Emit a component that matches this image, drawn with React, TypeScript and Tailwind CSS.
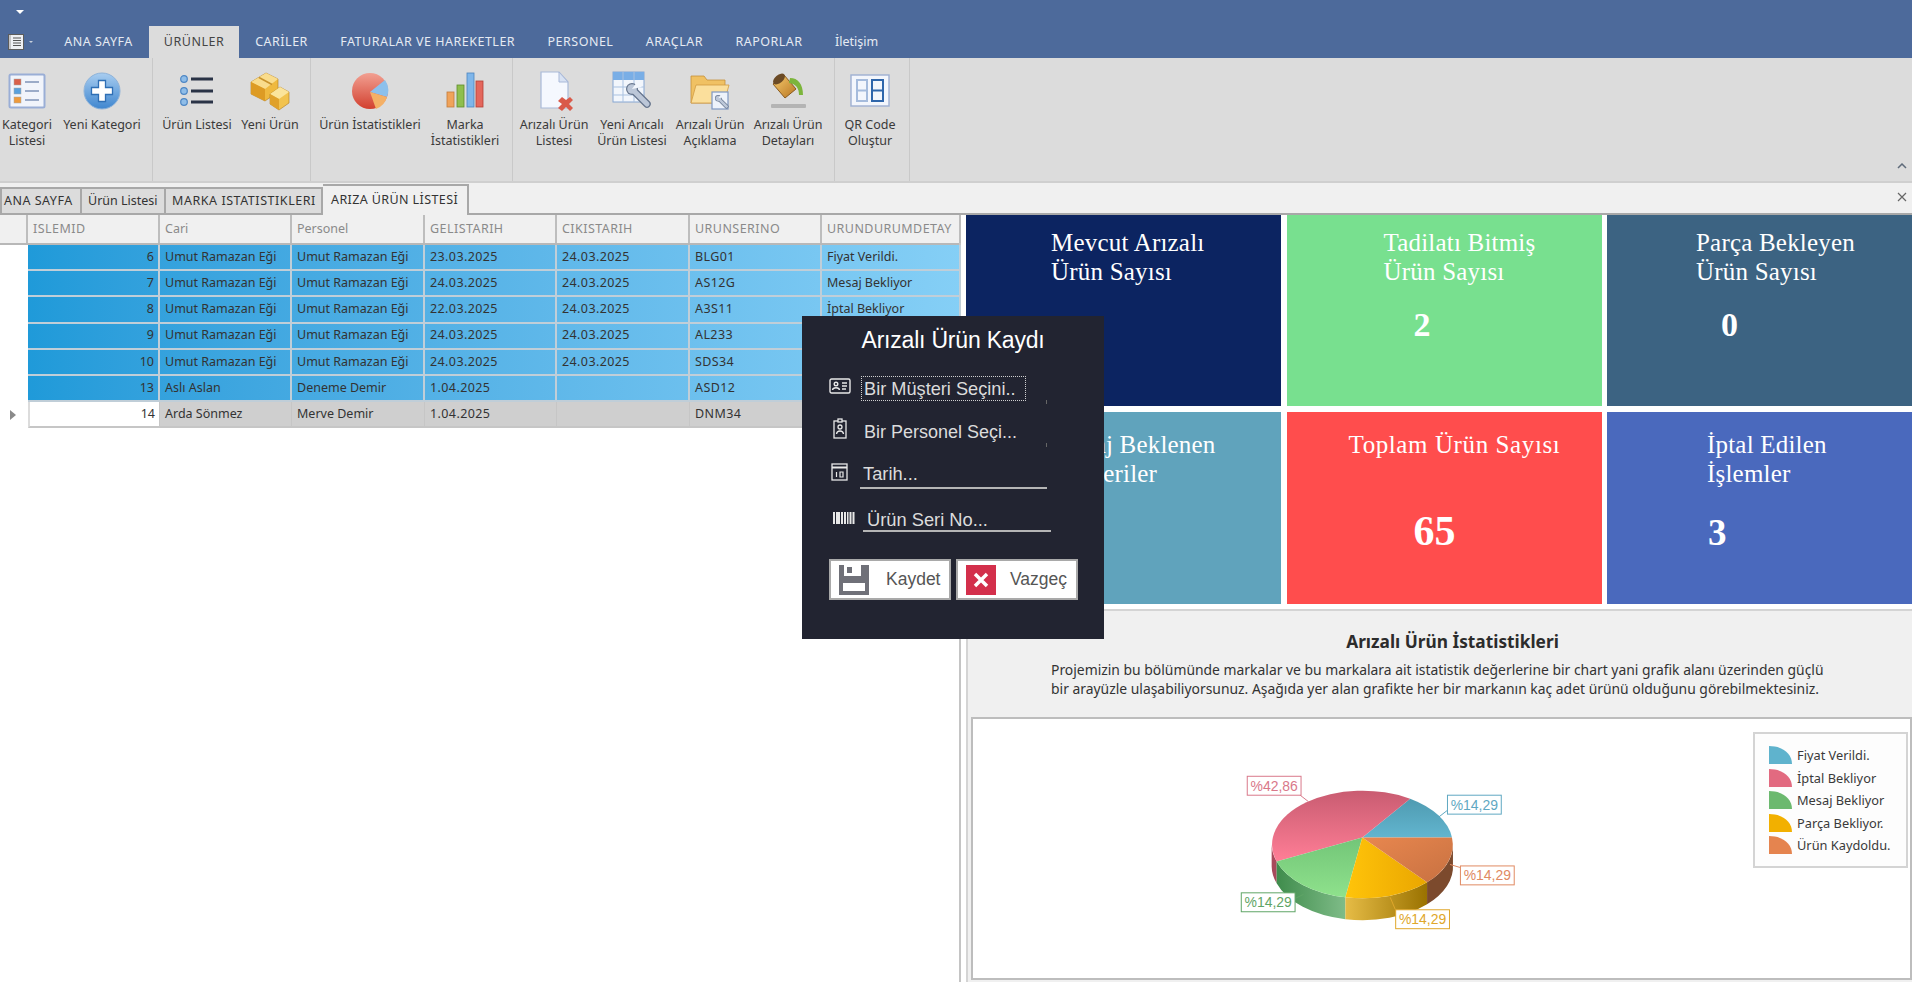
import type { ReactNode } from "react";

const uiFont = "font-['Noto_Sans','Liberation_Sans',sans-serif]";
const tileFont = "font-['Liberation_Serif',serif]";

const KategoriIcon = () => (
  <svg viewBox="0 0 40 40" className="h-10 w-10">
    <rect x="2.500" y="3.500" width="35" height="33" rx="1.500" fill="#f1f4fb" stroke="#9aaed6" strokeWidth="2" />
    <rect x="7" y="8" width="7" height="6" fill="#d9604a" stroke="#a8a8a8" strokeWidth=".5" />
    <rect x="7" y="17" width="7" height="6" fill="#5aa0dc" stroke="#a8a8a8" strokeWidth=".5" />
    <rect x="7" y="26" width="7" height="6" fill="#ee9a3c" stroke="#a8a8a8" strokeWidth=".5" />
    <path d="M18 11h14M18 20h14M18 29h14" stroke="#7f93b8" strokeWidth="1.400" />
  </svg>
);

const PlusIcon = () => (
  <svg viewBox="0 0 40 40" className="h-10 w-10">
    <defs>
      <linearGradient id="plusFill" x1="0" y1="0" x2="0" y2="1">
        <stop offset="0" stopColor="#a8cdf0" />
        <stop offset="1" stopColor="#3f86cf" />
      </linearGradient>
    </defs>
    <circle cx="20" cy="20" r="18" fill="url(#plusFill)" stroke="#8fb3d9" strokeWidth="1" />
    <path d="M16.500 9.500h7v7h7v7h-7v7h-7v-7h-7v-7h7z" fill="#fff" stroke="#2f6fb5" strokeWidth="1.300" />
  </svg>
);

const ListIcon = () => (
  <svg viewBox="0 0 40 40" className="h-10 w-10">
    {[8, 20, 31].map((y) => (
      <g key={y}>
        <circle cx="7" cy={y} r="3.300" fill="#8fbde8" stroke="#4d86c4" strokeWidth="1.200" />
        <rect x="14" y={y - 1.5} width="22" height="3" fill="#2a3346" />
      </g>
    ))}
  </svg>
);

const BoxesIcon = () => (
  <svg viewBox="0 0 40 40" className="h-10 w-10">
    <path d="M1 11l15-9 12 6v13l-13 9L1 23z" fill="#efb93f" stroke="#b07c20" strokeWidth=".6" />
    <path d="M1 11l14 7 13-10-12-6z" fill="#f9dc8c" />
    <path d="M15 18v12L1 23V11z" fill="#dd9b24" />
    <path d="M9 6.500l13 7" stroke="#c8922c" strokeWidth="1.500" />
    <path d="M20 23l10-7 9 5v11l-10 7-9-6z" fill="#f2c34f" stroke="#b07c20" strokeWidth=".6" />
    <path d="M20 23l9 5 10-7-9-5z" fill="#fbe49b" />
    <path d="M29 28v11l-9-6V23z" fill="#e0a12a" />
  </svg>
);

const PieIcon = () => (
  <svg viewBox="0 0 40 40" className="h-10 w-10">
    <defs>
      <linearGradient id="pieRed" x1="0" y1="0" x2="0" y2="1">
        <stop offset="0" stopColor="#f2a092" />
        <stop offset="1" stopColor="#d2402f" />
      </linearGradient>
    </defs>
    <circle cx="20" cy="20" r="18" fill="url(#pieRed)" />
    <path d="M20 21L35 9a18 18 0 0 1 2 17z" fill="#8cc0ec" />
    <path d="M20 21l17 5a18 18 0 0 1-11 12z" fill="#f4b066" />
  </svg>
);

const BarsIcon = () => (
  <svg viewBox="0 0 40 40" className="h-10 w-10">
    <rect x="2" y="21" width="7" height="15" fill="#f0a35a" stroke="#c47b3a" strokeWidth=".8" />
    <rect x="12" y="14" width="7" height="22" fill="#8fbf4d" stroke="#5f8d2c" strokeWidth=".8" />
    <rect x="22" y="2" width="7" height="34" fill="#7fb6ea" stroke="#4c84bf" strokeWidth=".8" />
    <rect x="31" y="10" width="7" height="26" fill="#e4675c" stroke="#b54036" strokeWidth=".8" />
  </svg>
);

const DocXIcon = () => (
  <svg viewBox="0 0 40 40" className="h-10 w-10">
    <path d="M7 1h18l9 10v26H7z" fill="#f5f8fe" stroke="#a9b9d8" strokeWidth="1.200" />
    <path d="M25 1v10h9z" fill="#d8e2f3" stroke="#a9b9d8" strokeWidth="1" />
    <path d="M24 30l4-4 4 3 4-3 3 3-4 4 4 4-3 3-4-4-4 4-4-3 4-4z" fill="#d95a4a" />
  </svg>
);

// Anahtar ikonu: baş sol üstte, sap sağ altta
const WrenchShape = ({ x, y, s, bg }: { x: number; y: number; s: number; bg: string }) => (
  <g transform={`translate(${x} ${y}) scale(${s})`}>
    <path d="M7 7l14 14" stroke="#66758d" strokeWidth="7.500" strokeLinecap="round" />
    <circle cx="6" cy="6" r="6" fill="#66758d" />
    <path d="M7 7l14 14" stroke="#bcc7d8" strokeWidth="5" strokeLinecap="round" />
    <circle cx="6" cy="6" r="4.800" fill="#bcc7d8" />
    <path d="M6 6l5-7 5 5z" fill={bg} />
  </g>
);

const TableWrenchIcon = () => (
  <svg viewBox="0 0 40 40" className="h-10 w-10">
    <rect x="1" y="1" width="31" height="30" fill="#f2f6fc" stroke="#86a6d2" strokeWidth="1" />
    <rect x="1" y="1" width="31" height="8" fill="#79aee6" />
    <path d="M1 16h31M1 24h31M11 1v30M22 1v30" stroke="#a9c1e0" strokeWidth="1" />
    <WrenchShape x={14} y={12} s={1} bg="#f2f6fc" />
  </svg>
);

const FolderIcon = () => (
  <svg viewBox="0 0 40 40" className="h-10 w-10">
    <path d="M1 5h13l3 4h18v23H1z" fill="#f0c163" stroke="#c48f3a" strokeWidth=".8" />
    <path d="M1 32l5-18h33l-5 18z" fill="#fbdf9c" stroke="#d19b42" strokeWidth=".8" />
    <rect x="22" y="21" width="16" height="17" fill="#eef3fb" stroke="#7f98c2" strokeWidth="1.200" />
    <WrenchShape x={25} y={24} s={0.55} bg="#eef3fb" />
  </svg>
);

const BucketIcon = () => (
  <svg viewBox="0 0 40 40" className="h-10 w-10">
    <defs>
      <linearGradient id="bucketFill" x1="0" y1="0" x2="1" y2="1">
        <stop offset="0" stopColor="#f7cd6f" />
        <stop offset="1" stopColor="#b87522" />
      </linearGradient>
    </defs>
    <path d="M5 13L16 4l12 14-11 9z" fill="url(#bucketFill)" stroke="#8a5a1d" strokeWidth="1" />
    <ellipse cx="11" cy="8" rx="7" ry="4" transform="rotate(-40 11 8)" fill="#6b4a25" />
    <path d="M22 7c8 0 13 6 13 17h-4c0-7-3-11-10-12z" fill="#7cb53c" />
    <rect x="3" y="33" width="35" height="4" rx="1" fill="#b4b4b4" />
  </svg>
);

const QrIcon = () => (
  <svg viewBox="0 0 40 40" className="h-10 w-10">
    <rect x="1" y="4" width="38" height="31" fill="#f3f6fc" stroke="#9eb0d2" strokeWidth="1.400" />
    <path d="M7 9h10v21H7zM7 19.500h10" fill="none" stroke="#a5bbdc" strokeWidth="2" />
    <path d="M22 9h11v21H22zM22 19.500h11" fill="none" stroke="#2f66ab" strokeWidth="2" />
  </svg>
);

type RibbonItem = { lines: string[]; icon: ReactNode; w: string };

const groups: { w: string; items: RibbonItem[] }[] = [
  {
    w: "w-[153px]",
    items: [
      { lines: ["Kategori", "Listesi"], icon: <KategoriIcon />, w: "w-[54px]" },
      { lines: ["Yeni Kategori"], icon: <PlusIcon />, w: "w-[96px]" },
    ],
  },
  {
    w: "w-[158px] pl-[4px]",
    items: [
      { lines: ["Ürün Listesi"], icon: <ListIcon />, w: "w-[80px]" },
      { lines: ["Yeni Ürün"], icon: <BoxesIcon />, w: "w-[66px]" },
    ],
  },
  {
    w: "w-[202px] pl-[4px]",
    items: [
      { lines: ["Ürün İstatistikleri"], icon: <PieIcon />, w: "w-[110px]" },
      { lines: ["Marka", "İstatistikleri"], icon: <BarsIcon />, w: "w-[80px]" },
    ],
  },
  {
    w: "w-[322px] pl-[2px]",
    items: [
      { lines: ["Arızalı Ürün", "Listesi"], icon: <DocXIcon />, w: "w-[78px]" },
      { lines: ["Yeni Arıcalı", "Ürün Listesi"], icon: <TableWrenchIcon />, w: "w-[78px]" },
      { lines: ["Arızalı Ürün", "Açıklama"], icon: <FolderIcon />, w: "w-[78px]" },
      { lines: ["Arızalı Ürün", "Detayları"], icon: <BucketIcon />, w: "w-[78px]" },
    ],
  },
  {
    w: "w-[75px]",
    items: [{ lines: ["QR Code", "Oluştur"], icon: <QrIcon />, w: "w-[70px]" }],
  },
];

const topTabs = ["ANA SAYFA", "ÜRÜNLER", "CARİLER", "FATURALAR VE HAREKETLER", "PERSONEL", "ARAÇLAR", "RAPORLAR", "İletişim"];

const columns = ["ISLEMID", "Cari", "Personel", "GELISTARIH", "CIKISTARIH", "URUNSERINO", "URUNDURUMDETAY"];

const rows = [
  ["6", "Umut Ramazan Eği", "Umut Ramazan Eği", "23.03.2025", "24.03.2025", "BLG01", "Fiyat Verildi."],
  ["7", "Umut Ramazan Eği", "Umut Ramazan Eği", "24.03.2025", "24.03.2025", "AS12G", "Mesaj Bekliyor"],
  ["8", "Umut Ramazan Eği", "Umut Ramazan Eği", "22.03.2025", "24.03.2025", "A3S11", "İptal Bekliyor"],
  ["9", "Umut Ramazan Eği", "Umut Ramazan Eği", "24.03.2025", "24.03.2025", "AL233", ""],
  ["10", "Umut Ramazan Eği", "Umut Ramazan Eği", "24.03.2025", "24.03.2025", "SDS34", ""],
  ["13", "Aslı Aslan", "Deneme Demir", "1.04.2025", "", "ASD12", ""],
];
const lastRow = ["14", "Arda Sönmez", "Merve Demir", "1.04.2025", "", "DNM34", ""];

const gridCols = "grid grid-cols-[132px_132px_133px_132px_133px_132px_139px]";
const cellTrack = (i: number) => (i >= 3 && i <= 5 ? "tracking-[0.4px]" : "");

const DataGrid = () => (
  <div className="text-[12.5px] leading-none text-[#333]">
    <div className="flex h-[30px] border-b-2 border-[#b8b8b8] bg-[#f0f0f0]">
      <div className="w-[28px] shrink-0 border-r-2 border-[#bdbdbd]" />
      <div className={gridCols}>
        {columns.map((c) => (
          <div key={c} className={`flex items-center overflow-hidden border-r-2 border-[#bdbdbd] bg-[#f0f0f0] pl-[5px] text-[#8a8a8a] ${c === "Cari" || c === "Personel" ? "" : "tracking-[0.45px]"}`}>
            {c}
          </div>
        ))}
      </div>
    </div>
    {rows.map((r) => (
      <div key={r[0]} className="flex h-[26.2px]">
        <div className="w-[28px] shrink-0" />
        <div className={`${gridCols} bg-gradient-to-r from-[#1f9ad9] to-[#85cff6]`}>
          {r.map((v, i) => (
            <div key={i} className={`flex items-center border-r-2 border-b-2 border-[#c0ced8] pl-[5px] pr-[4px] ${cellTrack(i)} ${i === 0 ? "justify-end" : ""}`}>
              {v}
            </div>
          ))}
        </div>
      </div>
    ))}
    <div className="flex h-[26.2px]">
      <div className="flex w-[28px] shrink-0 items-center pl-[10px]">
        <svg viewBox="0 0 6 10" className="h-[10px] w-[6px]">
          <path d="M0 0l6 5-6 5z" fill="#8a8a8a" />
        </svg>
      </div>
      <div className={`${gridCols} bg-[#cfcfcf]`}>
        {lastRow.map((v, i) => (
          <div key={i} className={`flex items-center border-r border-b-2 border-[#c6c6c6] pl-[5px] pr-[4px] ${cellTrack(i)} ${i === 0 ? "justify-end border-l-2 border-l-[#dcdcdc] bg-white" : ""}`}>
            {v}
          </div>
        ))}
      </div>
    </div>
  </div>
);

const Tile = ({ bg, title, num, titleCls, numCls, top }: { bg: string; title: string[]; num?: string; titleCls: string; numCls?: string; top: string }) => (
  <div className={`${bg} ${top} ${tileFont} text-white`}>
    <div className={`${titleCls} h-[57px] whitespace-nowrap text-[25px] leading-[28.5px]`}>
      {title.map((t) => (
        <div key={t}>{t}</div>
      ))}
    </div>
    {num && <div className={`${numCls} font-bold`}>{num}</div>}
  </div>
);

const legend = [
  { label: "Fiyat Verildi.", color: "#5fb3cd" },
  { label: "İptal Bekliyor", color: "#e26a80" },
  { label: "Mesaj Bekliyor", color: "#6cb96f" },
  { label: "Parça Bekliyor.", color: "#f2b000" },
  { label: "Ürün Kaydoldu.", color: "#e5844f" },
];

const pieLabels = [
  { x: 1247, y: 777, text: "%42,86", color: "#d9788a", line: "M1300 796l9 7" },
  { x: 1448, y: 796, text: "%14,29", color: "#5fa8c2", line: "M1448 812l-9 7" },
  { x: 1461, y: 867, text: "%14,29", color: "#e08a62", line: "M1461 869l-10 -3" },
  { x: 1396, y: 911, text: "%14,29", color: "#e0a72a", line: "M1396 911l-5 -12" },
  { x: 1241, y: 894, text: "%14,29", color: "#5fa566", line: "M1296 900l8 -4" },
];

const PieChart = () => (
  <svg viewBox="973 720 939 260" className="block h-full w-full">
    <defs>
      <linearGradient id="sRed" x1="0" y1="0" x2="0" y2="1">
        <stop offset="0" stopColor="#c95c71" />
        <stop offset="1" stopColor="#ff7e96" />
      </linearGradient>
      <linearGradient id="sBlue" x1="0" y1="0" x2="0" y2="1">
        <stop offset="0" stopColor="#4f9bb1" />
        <stop offset="1" stopColor="#62b5cf" />
      </linearGradient>
      <linearGradient id="sGreen" x1="0" y1="0" x2="0" y2="1">
        <stop offset="0" stopColor="#72c578" />
        <stop offset="1" stopColor="#8fe28c" />
      </linearGradient>
      <linearGradient id="sYellow" x1="0" y1="0" x2="1" y2="0">
        <stop offset="0" stopColor="#ffc40a" />
        <stop offset="1" stopColor="#eaa600" />
      </linearGradient>
      <linearGradient id="sOrange" x1="0" y1="0" x2="1" y2="1">
        <stop offset="0" stopColor="#e8874f" />
        <stop offset="1" stopColor="#c87141" />
      </linearGradient>
      <linearGradient id="wGreen" x1="0" y1="0" x2="1" y2="0">
        <stop offset="0" stopColor="#3f8c4c" />
        <stop offset="1" stopColor="#7fbc88" />
      </linearGradient>
      <linearGradient id="wYellow" x1="0" y1="0" x2="1" y2="0">
        <stop offset="0" stopColor="#e6bc46" />
        <stop offset="1" stopColor="#9a7200" />
      </linearGradient>
    </defs>
    {/* yan duvarlar */}
    <path d="M1272 846a91 54 0 0 0 5 17v22a91 54 0 0 1 -5 -17z" fill="#a84a5c" />
    <path d="M1277 863A91 54 0 0 0 1346 899v22A91 54 0 0 1 1277 885z" fill="url(#wGreen)" />
    <path d="M1346 899A91 54 0 0 0 1428 884v22A91 54 0 0 1 1346 921z" fill="url(#wYellow)" />
    <path d="M1428 884A91 54 0 0 0 1454 846v20A91 54 0 0 1 1428 906z" fill="#7c4a2d" />
    {/* üst dilimler */}
    <path d="M1363 839L1453 839A91 54 0 0 0 1411 800z" fill="url(#sBlue)" />
    <path d="M1363 839L1411 800A91 54 0 0 0 1277 863z" fill="url(#sRed)" />
    <path d="M1363 839L1277 863A91 54 0 0 0 1346 899z" fill="url(#sGreen)" />
    <path d="M1363 839L1346 899A91 54 0 0 0 1428 884z" fill="url(#sYellow)" />
    <path d="M1363 839L1428 884A91 54 0 0 0 1453 839z" fill="url(#sOrange)" />
    {pieLabels.map((l) => (
      <g key={l.x}>
        <path d={l.line} stroke={l.color} strokeWidth="1" fill="none" />
        <rect x={l.x + 0.5} y={l.y + 0.5} width="54" height="19" fill="#fff" stroke={l.color} strokeWidth="1" />
        <text x={l.x + 27.5} y={l.y + 15} textAnchor="middle" fontSize="14" fill={l.color} fontFamily="'Liberation Sans', sans-serif">
          {l.text}
        </text>
      </g>
    ))}
  </svg>
);

const IdCardIcon = () => (
  <svg viewBox="0 0 22 16" className="h-4 w-[22px]" fill="none" stroke="#e8e8e8" strokeWidth="1.400">
    <rect x="1" y="1" width="20" height="14" rx="1.500" />
    <circle cx="7" cy="6" r="1.800" />
    <path d="M3.500 12c.5-3 6.500-3 7 0M13 5h5M13 8h5M13 11h4" />
  </svg>
);

const BadgeIcon = () => (
  <svg viewBox="0 0 14 21" className="h-[21px] w-[14px]" fill="none" stroke="#e8e8e8" strokeWidth="1.300">
    <rect x="1" y="3" width="12" height="17" />
    <rect x="5" y="1" width="4" height="3" fill="#222431" />
    <circle cx="7" cy="9" r="2" />
    <path d="M3.500 16c.5-4 6.500-4 7 0" />
  </svg>
);

const CalendarIcon = () => (
  <svg viewBox="0 0 17 18" className="h-[18px] w-[17px]" fill="none" stroke="#e8e8e8" strokeWidth="1.300">
    <rect x="1" y="1" width="15" height="16" />
    <path d="M1 4.500h15" strokeWidth="2" />
    <path d="M5.500 9v5M9 9h3v5H9z" strokeWidth="1.200" />
  </svg>
);

const BarcodeIcon = () => (
  <svg viewBox="0 0 22 12" className="h-3 w-[22px]" fill="#e8e8e8">
    <path d="M0 0h2v12H0zM3 0h4v12H3zM8 0h2v12H8zM11 0h2v12h-2zM14 0h1.500v12H14zM16.500 0h2v12h-2zM19.500 0h2v12h-2z" />
  </svg>
);

const FormDialog = () => (
  <div className="absolute left-[802px] top-[316px] h-[323px] w-[302px] bg-[#222431] pl-[27px] font-['Liberation_Sans',sans-serif] text-[#dcdcdc]">
    <div className="pr-[27px] pt-[12px] text-center text-[23px] leading-[25px] tracking-[-0.2px] text-white">Arızalı Ürün Kaydı</div>
    <div className="mt-[23px] flex items-start">
      <div className="mt-[2px]"><IdCardIcon /></div>
      <div className="ml-[10px] flex h-[25px] w-[165px] items-center whitespace-nowrap border border-dotted border-[#cfcfcf] pl-[2px] pt-[2px] text-[18.2px]">Bir Müşteri Seçini..</div>
    </div>
    <div className="mt-[17px] flex items-start pl-[4px]">
      <BadgeIcon />
      <div className="ml-[17px] mt-[5px] whitespace-nowrap text-[18px] leading-[19px]">Bir Personel Seçi...</div>
    </div>
    <div className="mt-[21px] flex items-start pl-[2px]">
      <CalendarIcon />
      <div className="ml-[12px] h-[26px] w-[187px] border-b-2 border-[#b5b5b5] pl-[3px] text-[18.3px] leading-[21px]">Tarih...</div>
    </div>
    <div className="mt-[23px] flex items-start pl-[4px]">
      <BarcodeIcon />
      <div className="-mt-[2px] ml-[8px] h-[22px] w-[188px] whitespace-nowrap border-b-2 border-[#b5b5b5] pl-[4px] text-[18.3px] leading-[20px]">Ürün Seri No...</div>
    </div>
    <div className="mt-[27px] flex gap-[5px]">
      <button className="flex h-[41px] w-[122px] items-center border-2 border-[#a9a9a9] bg-white pl-[8px] text-[17.5px] text-[#555]">
        <svg viewBox="0 0 30 30" className="h-[30px] w-[30px]">
          <path d="M0 0h30v30H0z" fill="#6f7078" />
          <path d="M5 0h17v11H5z" fill="#fff" />
          <path d="M8 2h5v6H8z" fill="#6f7078" />
          <path d="M4 18h22v8H4z" fill="#fff" />
        </svg>
        <span className="ml-[17px]">Kaydet</span>
      </button>
      <button className="flex h-[41px] w-[122px] items-center border-2 border-[#a9a9a9] bg-white pl-[8px] text-[17.5px] text-[#555]">
        <span className="flex h-[30px] w-[30px] items-center justify-center bg-[#d32f4b]">
          <svg viewBox="0 0 12 12" className="h-4 w-4">
            <path d="M1.500 1.500l9 9M10.500 1.500l-9 9" stroke="#fff" strokeWidth="2.600" />
          </svg>
        </span>
        <span className="ml-[14px]">Vazgeç</span>
      </button>
    </div>
    {/* açılır kutuların küçük kalıntıları */}
    <div className="absolute left-[244px] top-[84px] h-[4px] w-[1px] bg-[#666]" />
    <div className="absolute left-[244px] top-[127px] h-[4px] w-[1px] bg-[#666]" />
  </div>
);

export default function App() {
  return (
    <div className={`relative h-[982px] w-[1912px] overflow-hidden bg-white ${uiFont}`}>
      {/* Başlık ve ana sekmeler */}
      <div className="h-[58px] bg-[#4d6a9b]">
        <div className="flex h-[26px] items-start pl-[16px] pt-[10px]">
          <div className="h-0 w-0 border-x-[4px] border-t-[4px] border-x-transparent border-t-white" />
        </div>
        <div className="flex h-[32px] items-center pl-[8px] text-[12.5px] text-[#e6ebf3]">
          <div className="flex w-[40px] items-center">
            <svg viewBox="0 0 16 16" className="h-4 w-4">
              <rect x=".5" y=".5" width="15" height="15" fill="#eef0f4" stroke="#5c5c5c" />
              <path d="M2 1v14" stroke="#9a9a9a" />
              <path d="M5 4h8M5 6.500h8M5 9h8M5 11.500h8" stroke="#555" />
            </svg>
            <div className="ml-[5px] h-0 w-0 border-x-[2px] border-t-[2px] border-x-transparent border-t-[#c8d0dc]" />
          </div>
          {topTabs.map((t) =>
            t === "ÜRÜNLER" ? (
              <div key={t} className="flex h-[32px] w-[90px] items-center justify-center bg-[#dcdcdc] tracking-[0.5px] text-[#444]">{t}</div>
            ) : (
              <div key={t} className={`flex h-[32px] items-center px-[16.2px] ${t === "İletişim" ? "" : "tracking-[0.5px]"}`}>{t}</div>
            ),
          )}
        </div>
      </div>

      {/* Şerit */}
      <div className="relative flex h-[125px] border-b-2 border-[#cfcfcf] bg-[#dcdcdc] text-[12.5px] leading-[16px] text-[#3a3a3a]">
        {groups.map((g, i) => (
          <div key={i} className={`flex ${g.w} shrink-0 border-r border-[#c9c9c9]`}>
            {g.items.map((it) => (
              <div key={it.lines[0] + it.lines.length + it.lines[1]} className={`${it.w} shrink-0 pt-[13px] text-center`}>
                <div className="flex h-[40px] justify-center">{it.icon}</div>
                <div className="mt-[6px] whitespace-nowrap">
                  {it.lines.map((l) => (
                    <div key={l}>{l}</div>
                  ))}
                </div>
              </div>
            ))}
          </div>
        ))}
        <svg viewBox="0 0 10 6" className="absolute bottom-[12px] right-[5px] h-[6px] w-[10px]" fill="none" stroke="#5f6b7a" strokeWidth="1.500">
          <path d="M1 5l4-4 4 4" />
        </svg>
      </div>

      {/* Belge sekmeleri */}
      <div className="flex h-[32px] items-end justify-between border-b-2 border-[#a8a8a8] bg-[#f0f0f0] text-[12.5px] leading-none text-[#333]">
        <div className="flex items-end">
          <div className="flex h-[26px] w-[82px] items-center border-2 border-b-0 border-[#a8a8a8] bg-[#dcdcdc] pl-[2px] tracking-[0.5px]">ANA SAYFA</div>
          <div className="flex h-[26px] w-[84px] items-center border-2 border-b-0 border-l-0 border-[#a8a8a8] bg-[#dcdcdc] pl-[6px]">Ürün Listesi</div>
          <div className="flex h-[26px] w-[157px] items-center whitespace-nowrap border-2 border-b-0 border-l-0 border-[#a8a8a8] bg-[#dcdcdc] pl-[6px] tracking-[0.55px]">MARKA ISTATISTIKLERI</div>
          <div className="-mb-[2px] flex h-[31px] w-[146px] items-center whitespace-nowrap border-2 border-b-0 border-l-0 border-[#a8a8a8] bg-[#f0f0f0] pl-[8px] tracking-[0.4px]">ARIZA ÜRÜN LİSTESİ</div>
        </div>
        <svg viewBox="0 0 10 10" className="mb-[11px] mr-[5px] h-[10px] w-[10px]" stroke="#666" strokeWidth="1.200">
          <path d="M1 1l8 8M9 1l-8 8" />
        </svg>
      </div>

      {/* İçerik */}
      <div className="flex h-[767px]">
        <div className="w-[961px] shrink-0 border-r-2 border-[#c4c4c4]">
          <DataGrid />
        </div>
        <div className="ml-[5px] flex min-w-0 flex-1 flex-col">
          <div className="grid h-[389px] grid-cols-[315px_315px_305px] grid-rows-[191px_192px] gap-x-[5.500px] gap-y-[6px]">
            <Tile bg="bg-[#0c2461]" top="pt-[14px]" titleCls="pl-[85px] tracking-[0.2px]" title={["Mevcut Arızalı", "Ürün Sayısı"]} />
            <Tile bg="bg-[#78e08f]" top="pt-[14px]" titleCls="pl-[97px] tracking-[0.2px]" numCls="pl-[127px] pt-[19px] text-[34px] leading-[40px]" title={["Tadilatı Bitmiş", "Ürün Sayısı"]} num="2" />
            <Tile bg="bg-[#3c6382]" top="pt-[14px]" titleCls="pl-[89px] tracking-[0.2px]" numCls="pl-[114px] pt-[19px] text-[34px] leading-[40px]" title={["Parça Bekleyen", "Ürün Sayısı"]} num="0" />
            <Tile bg="bg-[#60a3bc]" top="pt-[19px]" titleCls="pl-[85px] tracking-[0.2px]" title={["Mesaj Beklenen", "Müşteriler"]} />
            <Tile bg="bg-[#ff4d4d]" top="pt-[19px]" titleCls="pl-[62px] tracking-[0.6px]" numCls="pl-[127px] pt-[19px] text-[42px] leading-[48px]" title={["Toplam Ürün Sayısı"]} num="65" />
            <Tile bg="bg-[#4a69bd]" top="pt-[19px]" titleCls="pl-[100px] tracking-[0.2px]" numCls="pl-[101px] pt-[21px] text-[37px] leading-[48px]" title={["İptal Edilen", "İşlemler"]} num="3" />
          </div>
          <div className="mt-[5px] flex min-h-0 flex-1 flex-col border-l-2 border-t-2 border-[#d4d4d4] bg-[#f0f0f0] pl-[3px]">
            <div className="pl-[22px] pt-[19px] text-center text-[17.3px] font-bold leading-[24px] text-[#2c2c2c]">Arızalı Ürün İstatistikleri</div>
            <div className="mt-[6px] pl-[80px] text-[13.9px] leading-[19px] text-[#333]">
              <div>Projemizin bu bölümünde markalar ve bu markalara ait istatistik değerlerine bir chart yani grafik alanı üzerinden güçlü</div>
              <div>bir arayüzle ulaşabiliyorsunuz. Aşağıda yer alan grafikte her bir markanın kaç adet ürünü olduğunu görebilmektesiniz.</div>
            </div>
            <div className="relative mb-[2px] mt-[19px] min-h-0 flex-1 border-2 border-[#bdbdbd] bg-white">
              <PieChart />
              <div className="absolute right-[2px] top-[13px] flex h-[136px] w-[155px] flex-col justify-center gap-[4.500px] border-2 border-[#d4d4d4] bg-[#fdfdfd] pl-[14px] text-[12.800px] leading-[18px] text-[#3a3a3a]">
                {legend.map((l) => (
                  <div key={l.label} className="flex items-center">
                    <svg viewBox="0 0 23 18" className="h-[18px] w-[23px]">
                      <path d="M0 0c14 0 23 8 23 18H0z" fill={l.color} />
                    </svg>
                    <span className="ml-[5px] whitespace-nowrap">{l.label}</span>
                  </div>
                ))}
              </div>
            </div>
          </div>
        </div>
      </div>

      <FormDialog />
    </div>
  );
}
